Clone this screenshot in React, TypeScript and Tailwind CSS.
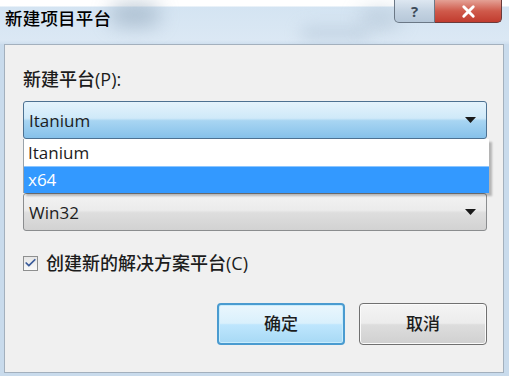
import { Check, X } from 'lucide-react'

const font = "font-['Open_Sans','Noto_Sans_CJK_SC',sans-serif]"

const Arrow = () => (
  <svg width="11" height="6" viewBox="0 0 11 6" className="shrink-0">
    <path d="M0 0 H11 L5.5 6 Z" fill="#1a1a1a" />
  </svg>
)

const App = () => {
  return (
    <div className={`w-[509px] h-[376px] flex flex-col bg-[#c9dbec] text-[#1c1c1c] ${font}`}>
      {/* title bar */}
      <div className="h-[44px] shrink-0 flex items-start justify-between bg-[linear-gradient(180deg,#ffffff_0px,#ffffff_6px,#d4e4f2_7px,#dbe8f4_40px,#cfdfee_44px)] relative overflow-hidden">
        <div className="absolute left-[110px] top-[4px] w-[50px] h-[22px] rounded-full bg-[#8fa4b8] blur-[10px] opacity-60" />
        <div className="absolute left-[360px] top-[10px] w-[40px] h-[18px] rounded-full bg-[#9fb2c4] blur-[10px] opacity-50" />
        <div className="absolute left-[300px] top-[26px] w-[70px] h-[14px] rounded-full bg-[#b3c6d8] blur-[8px] opacity-60" />
        <span className="relative pl-[5px] pt-[7px] text-[17.5px] leading-[22px] text-black tracking-[0.2px] font-medium">新建项目平台</span>
        <div className="relative flex mr-[7px] h-[23px]">
          <div className="w-[41px] h-full flex items-center justify-center border border-t-0 border-[#6b7886] rounded-bl-[5px] bg-[linear-gradient(180deg,#dde7f1,#c4d3e2_50%,#b6c7d8)] text-[#3d4b5a] text-[15px] font-bold leading-none">
            ?
          </div>
          <div className="w-[67px] h-full flex items-center justify-center border border-t-0 border-l-0 border-[#6b3b3b] rounded-br-[5px] bg-[linear-gradient(180deg,#e4a195,#cf5a4b_50%,#c13c2f)]">
            <X size={19} strokeWidth={3.6} className="text-white" />
          </div>
        </div>
      </div>

      {/* client area */}
      <div className="flex-1 ml-[4px] mr-[5px] mb-[3px] border border-[#a3b0bd] bg-[#f0f0f0] flex flex-col pl-[18px] pr-[16px]">
        <div className="mt-[24px] text-[18px] leading-[20px] font-medium">新建平台(P):</div>

        <div className="mt-[12px] w-[464px] flex flex-col">
          <div className="h-[38px] flex items-center justify-between pl-[5px] pr-[10px] rounded-[3px] border border-[#4d7191] bg-[linear-gradient(180deg,#e4f3fc_0%,#cfe9f9_45%,#a8d5f2_52%,#86c1ea_100%)]">
            <span className="text-[17px] leading-none font-medium">Itanium</span>
            <Arrow />
          </div>
          <div className="relative border-l border-[#9aa3ab] shadow-[3px_3px_2px_rgba(0,0,0,0.25)] mr-[-2px]">
            <div className="h-[27px] flex items-center pl-[4px] bg-white text-[17px] font-medium">Itanium</div>
            <div className="h-[27px] flex items-center pl-[4px] bg-[#3399ff] text-white text-[17px] font-medium border-t border-[#8cc6ff]">x64</div>
          </div>
          <div className="h-[38px] flex items-center justify-between pl-[5px] pr-[10px] rounded-[3px] border border-[#8b8d8f] bg-[linear-gradient(180deg,#f3f3f3_0%,#ebebeb_45%,#dedede_52%,#d2d2d2_100%)]">
            <span className="text-[17px] leading-none font-medium">Win32</span>
            <Arrow />
          </div>
        </div>

        <label className="mt-[22px] h-[20px] flex items-center gap-[8px]">
          <span className="w-[15px] h-[15px] flex items-center justify-center border border-[#8e8f8f] bg-[linear-gradient(180deg,#e6e6e6,#fafafa)]">
            <Check size={14} strokeWidth={3.2} className="text-[#3a5b9a]" />
          </span>
          <span className="text-[18px] leading-[20px] font-medium">创建新的解决方案平台(C)</span>
        </label>

        <div className="mt-[30px] flex justify-end gap-[14px]">
          <button className="w-[128px] h-[42px] rounded-[4px] border-2 border-[#4a9bd0] shadow-[inset_0_0_0_1px_#c8ecfc] bg-[linear-gradient(180deg,#eaf6fd_0%,#d9f0fc_48%,#bee6fd_52%,#a7d9f5_100%)] text-[17px] font-medium">
            确定
          </button>
          <button className="w-[128px] h-[42px] rounded-[4px] border border-[#707070] shadow-[inset_0_0_0_1px_#fbfbfb] bg-[linear-gradient(180deg,#f4f4f4_0%,#ececec_48%,#dddddd_52%,#d0d0d0_100%)] text-[17px] font-medium">
            取消
          </button>
        </div>
      </div>
    </div>
  )
}

export default App
